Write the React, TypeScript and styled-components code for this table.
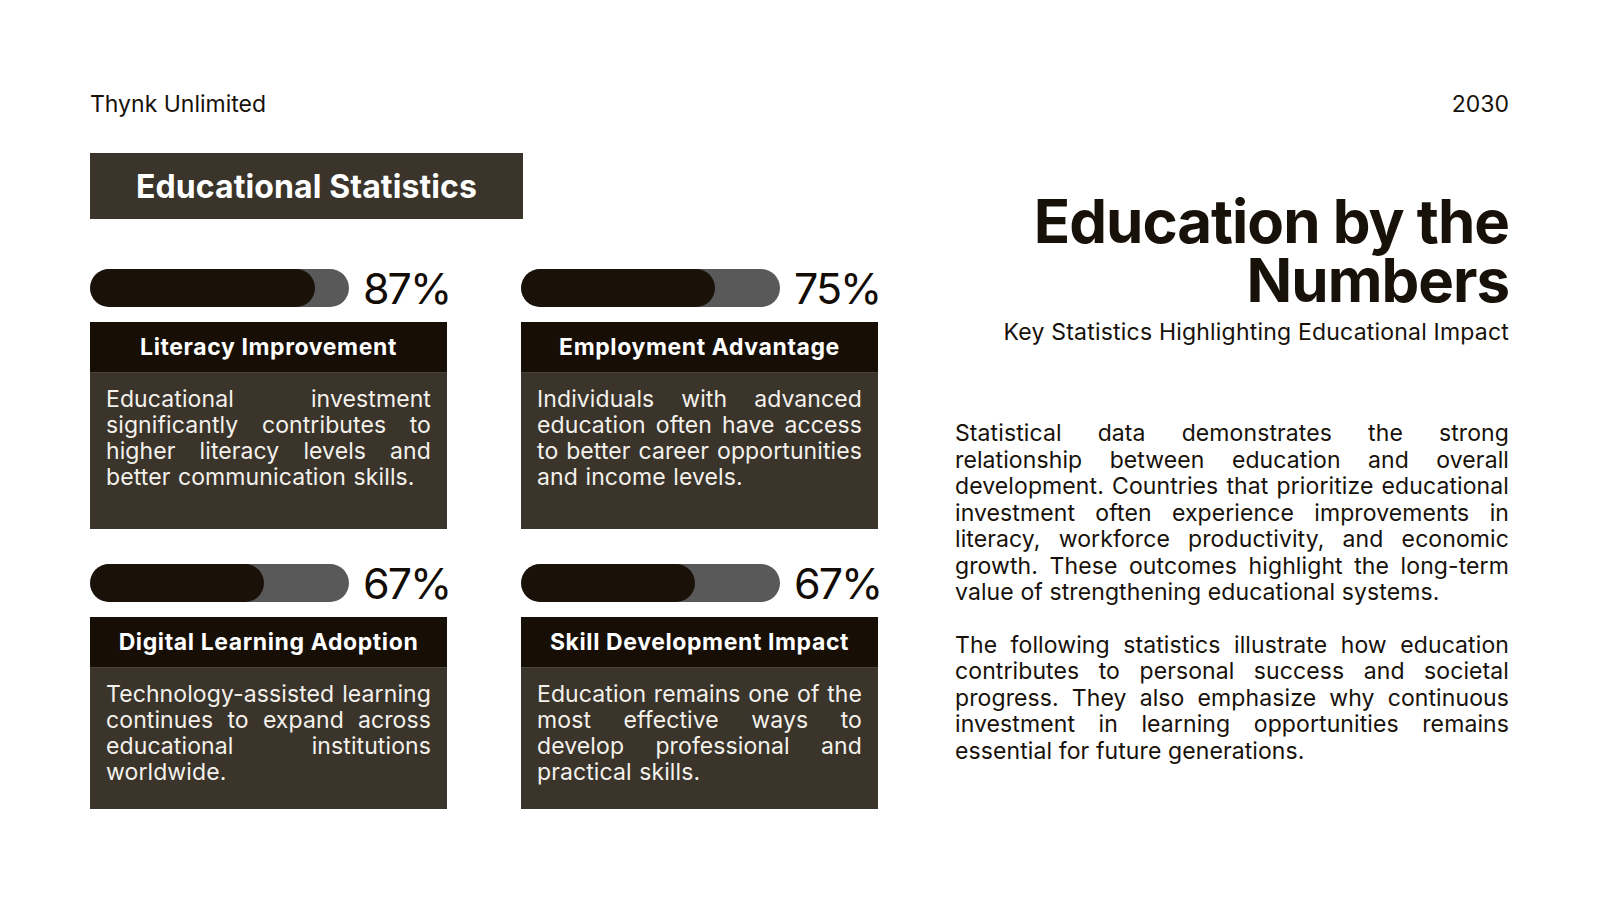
import React from "react";
import styled, { createGlobalStyle } from "styled-components";

const GlobalStyle = createGlobalStyle`
  html, body { margin: 0; padding: 0; background: #ffffff; }
  body { font-family: "Inter", "Noto Sans", sans-serif; color: #17110a; }
  * { box-sizing: border-box; }
`;

const Page = styled.div`
  width: 1600px;
  height: 900px;
  padding: 91px 91px 0 90px;
  background: #ffffff;
  overflow: hidden;
`;

const TopBar = styled.header`
  display: flex;
  justify-content: space-between;
  align-items: center;
  font-size: 23px;
  line-height: 26px;
  color: #17110a;
`;

const Main = styled.main`
  display: grid;
  grid-template-columns: 788px 1fr;
  column-gap: 77px;
  margin-top: 36px;
`;

const LeftCol = styled.section`
  display: flex;
  flex-direction: column;
`;

const SectionTag = styled.h2`
  margin: 0;
  width: 433px;
  height: 66px;
  display: flex;
  align-items: center;
  justify-content: center;
  background: #3a342b;
  color: #ffffff;
  font-size: 32px;
  font-weight: 700;
  letter-spacing: 0.1px;
`;

const StatGrid = styled.div`
  display: grid;
  grid-template-columns: 357px 357px;
  grid-template-rows: 260px 245px;
  column-gap: 74px;
  row-gap: 35px;
  margin-top: 50px;
`;

const Stat = styled.article`
  display: flex;
  flex-direction: column;
`;

const BarRow = styled.div`
  display: flex;
  align-items: center;
  gap: 14px;
  height: 38px;
`;

const Track = styled.div`
  flex: 0 0 259px;
  height: 38px;
  border-radius: 19px;
  background: #595959;
  overflow: hidden;
  display: flex;
`;

const Fill = styled.div`
  height: 100%;
  border-radius: 19px;
  background: #1a1209;
`;

const Percent = styled.span`
  font-size: 43px;
  line-height: 38px;
  font-weight: 400;
  letter-spacing: -2px;
  white-space: nowrap;
  color: #120c05;
`;

const Card = styled.div`
  margin-top: 15px;
  display: flex;
  flex-direction: column;
  flex: 1;
`;

const CardTitle = styled.h3`
  margin: 0;
  height: 50px;
  flex: 0 0 50px;
  display: flex;
  align-items: center;
  justify-content: center;
  background: #170f06;
  color: #ffffff;
  font-size: 23px;
  font-weight: 700;
  letter-spacing: 0.6px;
`;

const CardBody = styled.p`
  margin: 0;
  flex: 1;
  padding: 13px 16px 14px;
  background: #3a342b;
  border-top: 1px solid #4a443b;
  color: #f4f1ec;
  font-size: 23px;
  line-height: 26px;
  letter-spacing: 0.1px;
  word-spacing: 1px;
  text-align: justify;
`;

const RightCol = styled.section`
  display: flex;
  flex-direction: column;
  padding-top: 39px;
`;

const Title = styled.h1`
  margin: 0;
  text-align: right;
  font-size: 60px;
  line-height: 59px;
  font-weight: 700;
  letter-spacing: -1px;
  color: #17110a;
`;

const Subtitle = styled.p`
  margin: 9px 0 0;
  text-align: right;
  font-size: 23px;
  line-height: 26px;
  letter-spacing: 0.2px;
  color: #17110a;
`;

const Body = styled.div`
  margin-top: 75px;
  display: flex;
  flex-direction: column;
  gap: 26px;
`;

const Para = styled.p`
  margin: 0;
  font-size: 23px;
  line-height: 26.5px;
  letter-spacing: 0.1px;
  text-align: justify;
  color: #17110a;
`;

const stats = [
  {
    pct: 87,
    title: "Literacy Improvement",
    text: "Educational investment significantly contributes to higher literacy levels and better communication skills.",
  },
  {
    pct: 75,
    title: "Employment Advantage",
    text: "Individuals with advanced education often have access to better career opportunities and income levels.",
  },
  {
    pct: 67,
    title: "Digital Learning Adoption",
    text: "Technology-assisted learning continues to expand across educational institutions worldwide.",
  },
  {
    pct: 67,
    title: "Skill Development Impact",
    text: "Education remains one of the most effective ways to develop professional and practical skills.",
  },
];

export default function App() {
  return (
    <>
      <GlobalStyle />
      <Page>
        <TopBar>
          <span>Thynk Unlimited</span>
          <span>2030</span>
        </TopBar>
        <Main>
          <LeftCol>
            <SectionTag>Educational Statistics</SectionTag>
            <StatGrid>
              {stats.map((s) => (
                <Stat key={s.title}>
                  <BarRow>
                    <Track>
                      <Fill style={{ width: `${s.pct}%` }} />
                    </Track>
                    <Percent>{s.pct}%</Percent>
                  </BarRow>
                  <Card>
                    <CardTitle>{s.title}</CardTitle>
                    <CardBody>{s.text}</CardBody>
                  </Card>
                </Stat>
              ))}
            </StatGrid>
          </LeftCol>
          <RightCol>
            <Title>
              Education by the
              <br />
              Numbers
            </Title>
            <Subtitle>Key Statistics Highlighting Educational Impact</Subtitle>
            <Body>
              <Para>
                Statistical data demonstrates the strong relationship between education and overall
                development. Countries that prioritize educational investment often experience
                improvements in literacy, workforce productivity, and economic growth. These outcomes
                highlight the long-term value of strengthening educational systems.
              </Para>
              <Para>
                The following statistics illustrate how education contributes to personal success and
                societal progress. They also emphasize why continuous investment in learning
                opportunities remains essential for future generations.
              </Para>
            </Body>
          </RightCol>
        </Main>
      </Page>
    </>
  );
}
